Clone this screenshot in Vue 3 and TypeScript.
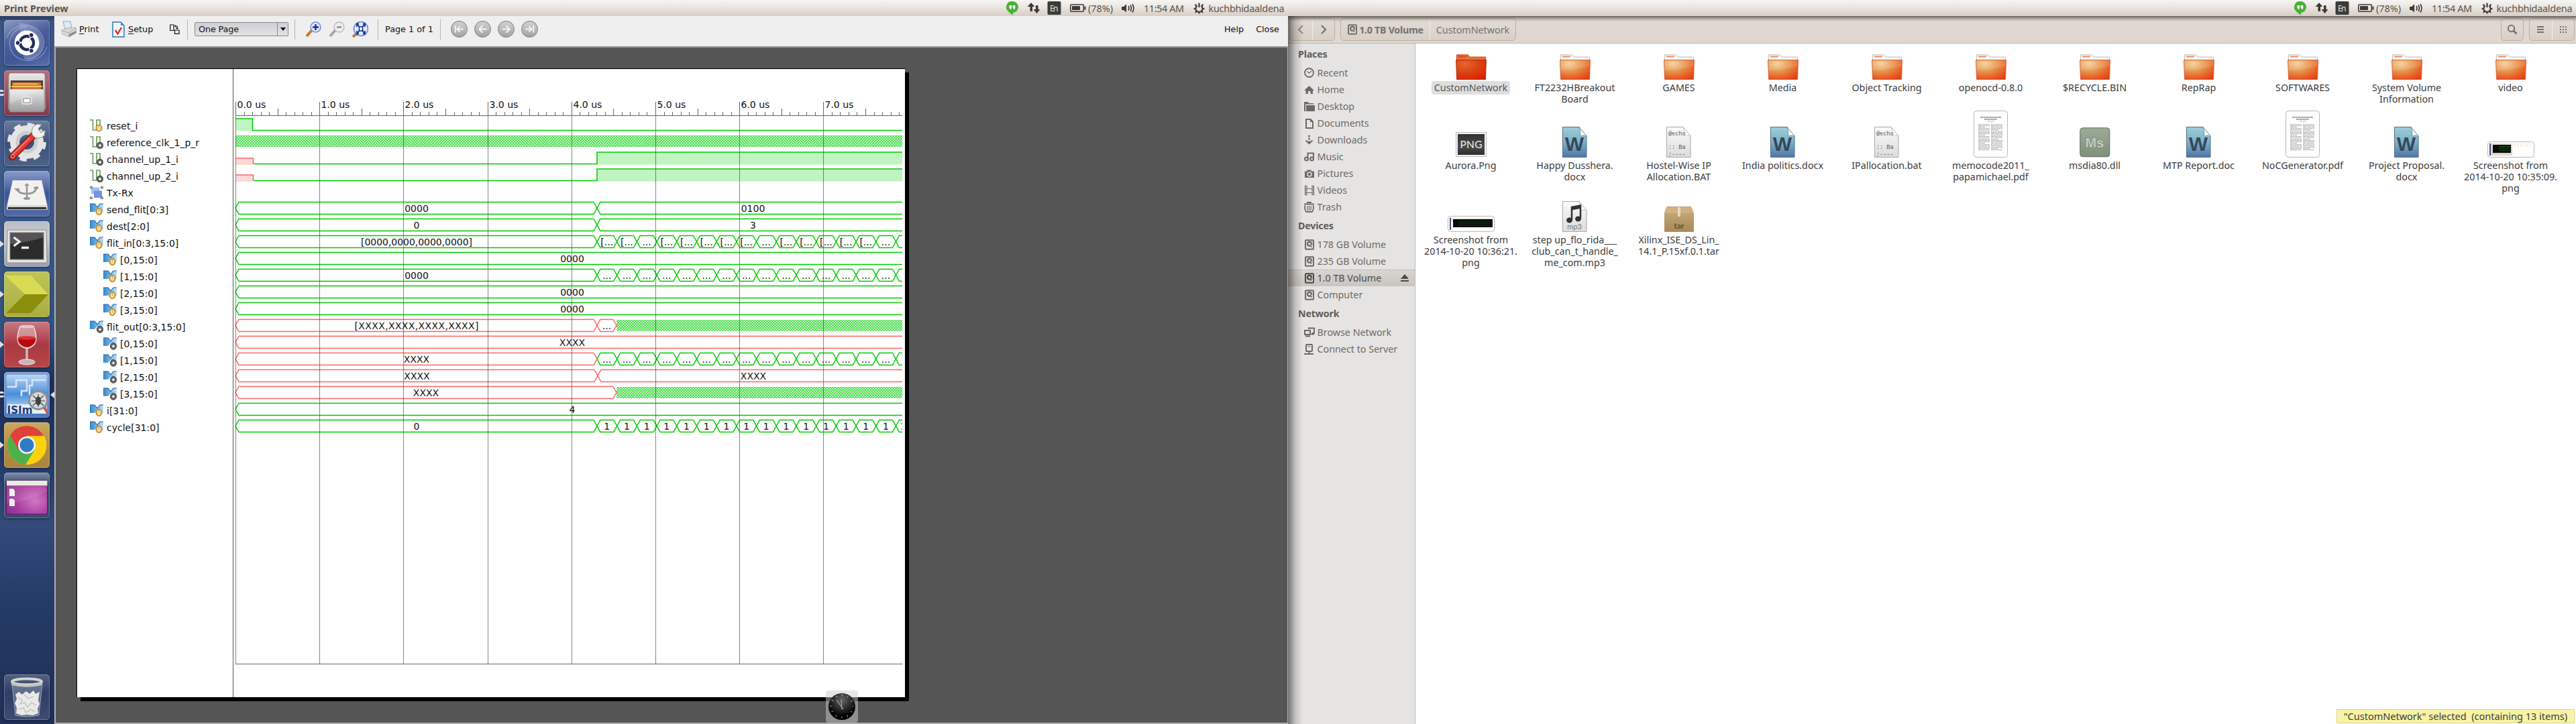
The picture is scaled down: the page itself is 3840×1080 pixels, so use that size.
<script setup lang="ts">
interface Launch { icon: string; bg: string; left?: 'one' | 'two'; right?: boolean }
interface Sig { name: string; icon: 'bitU' | 'bitO' | 'group' | 'busU' | 'busO'; indent?: boolean }
interface Item { icon: string; label: string; active?: boolean; eject?: boolean }
interface FileItem { kind: string; lines: string[]; selected?: boolean }
interface Seg { d: string; color: string }
interface Txt { x: number; y: number; t: string; len?: number }

const GREEN = '#00cc00'
const RED = '#ff6464'

const launcher: Launch[] = [
  { bg: 'linear-gradient(160deg,#8d9cc4 0%,#4a5e9c 40%,#405694 70%,#5a6fb0 100%)', icon: '<path d="M4 26C14 2 50 2 58 26C64 44 50 58 34 58M64 40C56 66 18 66 10 44C4 28 16 10 34 10" fill="none" stroke="#b9c6e6" stroke-opacity=".5" stroke-width="1.3"/><path d="M22 4C44 4 60 20 58 40C52 58 40 60 30 58" fill="#a7b6da" fill-opacity=".35"/><circle cx="34" cy="34" r="18.5" fill="#fff"/><circle cx="34" cy="34" r="10" fill="none" stroke="#1f2f57" stroke-width="4.4" stroke-dasharray="18.9 2" stroke-dashoffset="9"/><circle cx="20.5" cy="34" r="3.4" fill="#1f2f57" stroke="#fff"/><circle cx="40.700" cy="22.300" r="3.400" fill="#1f2f57" stroke="#fff"/><circle cx="40.700" cy="45.700" r="3.400" fill="#1f2f57" stroke="#fff"/>' },
  { bg: 'linear-gradient(#b57078,#85374a)', left: 'two', icon: '<path d="M10 4H58Q61 4 61 8L62 58H6L7 8Q7 4 10 4Z" fill="url(#gMetal)" stroke="#777" stroke-width=".6"/><rect x="10" y="15" width="48" height="16" fill="#4a4038"/><path d="M12 18H55V29H12Z" fill="#d9762b"/><path d="M11 23H57V25H11ZM14 19.500H50V21H14Z" fill="#f6c66b"/><path d="M8 28H60V60Q60 62 58 62H10Q8 62 8 60Z" fill="url(#gMetal)" stroke="#888" stroke-width=".7"/><path d="M8 28H58L8 50Z" fill="#fff" opacity=".22"/><rect x="27" y="40" width="14" height="10" rx="3" fill="#a5a5a5" stroke="#eee" stroke-width="1.5"/><rect x="29.5" y="42.5" width="9" height="5" rx="1" fill="#fff"/>' },
  { bg: 'linear-gradient(#6a7b99,#3a5180 50%,#4f6285)', icon: '<circle cx="34" cy="32" r="18" fill="none" stroke="#e4e4e4" stroke-width="14"/><circle cx="34" cy="32" r="26" fill="none" stroke="#e4e4e4" stroke-width="6" stroke-dasharray="10.210 10.210"/><circle cx="34" cy="32" r="14" fill="none" stroke="#cdcdcd" stroke-width="5"/><path d="M12 54L45 21" stroke="#8e1712" stroke-width="10.500" stroke-linecap="round"/><path d="M12.500 53.500L42 24" stroke="#dc3b33" stroke-width="7.500" stroke-linecap="round"/><path d="M12.500 51L38 26" stroke="#f07a70" stroke-width="2" stroke-linecap="round"/><path d="M42 21Q39 8 50 5L56 6L51 12L55 18L61 14Q62 25 52 26L47 26Z" fill="#f0f0ee" stroke="#8c8c88"/><circle cx="13" cy="53" r="2.300" fill="#8e1712" stroke="#f4b0ab"/>' },
  { bg: 'linear-gradient(#8a9bc8,#3c559a 50%,#5269ac)', icon: '<path d="M13 14H56L65 53V58H4V53Z" fill="#d8d8d8" stroke="#888" stroke-width=".7"/><path d="M13 14H56L64 51H5Z" fill="#f1f1f0"/><path d="M6 54H63V57H6Z" fill="#333"/><g fill="none" stroke="#979797" stroke-width="2.600"><path d="M34 21V40M20 28Q22 34 34 34Q47 34 48 25"/></g><ellipse cx="34" cy="41" rx="5" ry="2" fill="#979797"/><path d="M34 18L38 22H30ZM15 26H23V30H19ZM44 24L51 23V27H45Z" fill="#979797"/>' },
  { bg: 'linear-gradient(#b8bcc8,#c9cad0 30%,#9a9faf)', left: 'one', icon: '<path d="M5 13H63L64 60Q64 62 62 62H6Q4 62 4 60Z" fill="#e4e4e2" stroke="#8a8a8a"/><rect x="9" y="17" width="50" height="40" fill="#2b2c2c" stroke="#777"/><path d="M9 17H59V24Q34 32 9 34Z" fill="#777" opacity=".55"/><path d="M14.500 24L23 30.500L14.500 37M26 39.500H37" fill="none" stroke="#eee" stroke-width="3.300"/>' },
  { bg: 'linear-gradient(#bfc459,#a9ad42)', left: 'one', icon: '<path d="M2 6H40L66 34H31Z" fill="#dadb55"/><path d="M31 34H66L40 62H3Z" fill="#8b8d0c"/>' },
  { bg: 'linear-gradient(#c97a80,#a93a42 50%,#b8454a)', left: 'one', icon: '<path d="M34 38V58" stroke="#c9bcbc" stroke-width="3.500"/><ellipse cx="34" cy="60" rx="12" ry="4" fill="#c9b5b5" stroke="#f3eaea"/><path d="M24 7Q17 25 23 34Q34 45 45 34Q51 25 44 7Z" fill="#e3c3c6" fill-opacity=".55" stroke="#ece1e1" stroke-width="1.500"/><path d="M21 24H47Q48 31 42 35Q34 41 26 35Q20 31 21 24Z" fill="#b30b10"/><ellipse cx="34" cy="24" rx="12.800" ry="2.800" fill="#e23035"/><ellipse cx="34" cy="7" rx="10" ry="1.800" fill="none" stroke="#e8dada"/>' },
  { bg: 'linear-gradient(#7da0d6,#4878bd)', left: 'two', right: true, icon: '<rect x="3.500" y="4" width="61" height="58" rx="2" fill="url(#gIsim)"/><path d="M5 22H18V12H34V28H26V36M62 12H42V20H38V34" fill="none" stroke="#d5e6f8" stroke-width="2.500"/><path d="M5 62V48H44L64 58V62Z" fill="#e9eff6"/><circle cx="51" cy="42" r="13.500" fill="#d5d9dc" stroke="#8a8f94" stroke-width="3"/><ellipse cx="51" cy="43" rx="4" ry="6.500" fill="#3a3a3a"/><path d="M43 35L59 50M59 35L43 50M41 43H61M51 33V52" stroke="#444" stroke-width="1.200"/><path d="M60 53L65 61" stroke="#c95b55" stroke-width="4"/><text x="4.500" y="62" font-family="DejaVu Sans" font-size="16" font-weight="bold" fill="#1c3c7c" textLength="38" lengthAdjust="spacingAndGlyphs">ISIm</text>' },
  { bg: 'linear-gradient(#c9a95f,#b18c3e 60%,#a98540)', left: 'one', icon: '<circle cx="34" cy="34" r="29" fill="#ffd41c"/><path d="M34 34L8.900 19.500A29 29 0 0 1 59.500 20.500L34 20.500Z" fill="#e2403b"/><path d="M8.900 19.500A29 29 0 0 0 32.500 63L46 41L34 34L22 38Z" fill="#4fb04b"/><path d="M34 20.500H60A29 29 0 0 1 32.500 63L46 41Z" fill="#fdd10c"/><path d="M8.900 19.500L22 41L34 20.500Z" fill="#e2403b"/><circle cx="34" cy="34" r="13" fill="#f3f3f3"/><circle cx="34" cy="34" r="10.500" fill="#2f7cc4"/>' },
  { bg: 'linear-gradient(#7d8ba4,#3d4e74 25%,#3c4a72)', icon: '<rect x="3.500" y="12" width="61" height="50" rx="2" fill="url(#gPurple)" stroke="#5c1763"/><path d="M4 12H64.500V19.500H4Z" fill="#ecebe0"/><path d="M4 19H64.500V20H4Z" fill="#9a8d4a"/><path d="M8 24H13.500L16 26.500V35H8ZM8 39H13.500L16 41.500V50H8Z" fill="#f3eef4"/><path d="M4 20H64V28Q34 44 4 46Z" fill="#fff" opacity=".1"/>' },
]
const trashIcon = '<path d="M12 14H57L52 61Q34 65 17 61Z" fill="#b9c2d6" fill-opacity=".35" stroke="#aab4cb" stroke-width=".8"/><path d="M17 30L22 26L27 30L33 25L38 29L44 24L47 29L53 26L51 38L53 44L50 51L51 58L43 61L34 60L26 61L18 58L19 50L16 43L19 37Z" fill="#e9e9e7"/><path d="M20 34L27 38L24 44L31 42L35 49L41 42L48 46M22 52L29 50L33 57L40 52L46 56M30 30L36 36L44 33" fill="none" stroke="#c6c6c4" stroke-width="1.600"/><ellipse cx="34" cy="11" rx="22" ry="4.500" fill="none" stroke="#d4d4d0" stroke-width="4"/><path d="M11 12V16Q34 22 57 16V12Q34 20 11 12Z" fill="#c2c2be"/>'

const signals: Sig[] = [
  { name: 'reset_i', icon: 'bitU' }, { name: 'reference_clk_1_p_r', icon: 'bitO' },
  { name: 'channel_up_1_i', icon: 'bitO' }, { name: 'channel_up_2_i', icon: 'bitO' },
  { name: 'Tx-Rx', icon: 'group' }, { name: 'send_flit[0:3]', icon: 'busU' }, { name: 'dest[2:0]', icon: 'busU' },
  { name: 'flit_in[0:3,15:0]', icon: 'busU' },
  ...[0, 1, 2, 3].map((n): Sig => ({ name: `[${n},15:0]`, icon: 'busU', indent: true })),
  { name: 'flit_out[0:3,15:0]', icon: 'busO' },
  ...[0, 1, 2, 3].map((n): Sig => ({ name: `[${n},15:0]`, icon: 'busO', indent: true })),
  { name: 'i[31:0]', icon: 'busU' }, { name: 'cycle[31:0]', icon: 'busU' },
]
const glyph: Record<string, string> = {
  bitU: '<path d="M0 1H4.500V16H10V1H15V14" fill="none" stroke="#6f9c5f" stroke-width="1.700"/><ellipse cx="13.500" cy="13" rx="4.700" ry="5" fill="#dfa93a" stroke="#8b6512" stroke-width=".6"/><path d="M12 10V13.500Q12 15.500 13.500 15.500Q15 15.500 15 13.500V10" fill="none" stroke="#fff" stroke-width="1.300"/>',
  bitO: '<path d="M0 1H4.500V16H10V1H15V14" fill="none" stroke="#6f9c5f" stroke-width="1.700"/><ellipse cx="15" cy="14" rx="4.700" ry="4.900" fill="#666" stroke="#333" stroke-width=".8"/><path d="M13 14H17M15 12V16" stroke="#fff" stroke-width="1.400"/>',
  group: '<rect x="2" y="1.500" width="12" height="10" fill="#9cc2f5"/><rect x="6" y="6.500" width="12" height="10.500" fill="#7295dd"/><g fill="#fff" stroke="#555"><rect x=".8" y=".5" width="2.400" height="2.400"/><rect x="16.800" y=".5" width="2.400" height="2.400"/><rect x=".8" y="16" width="2.400" height="2.400"/><rect x="16.800" y="16" width="2.400" height="2.400"/></g>',
  busU: '<path d="M0 1H7L11 6L15 1H20V13H15L11 9L7 13H0Z" fill="url(#gBus)"/><path d="M0 1H7L11 6L15 1H20" fill="none" stroke="#2565a8" stroke-width="1.200"/><ellipse cx="13.500" cy="12.500" rx="4.700" ry="5.200" fill="#dfa93a" stroke="#8b6512" stroke-width=".6"/><path d="M12 9.500V13Q12 15 13.500 15Q15 15 15 13V9.500" fill="none" stroke="#fff" stroke-width="1.300"/>',
  busO: '<path d="M0 1H7L11 6L15 1H20V13H15L11 9L7 13H0Z" fill="url(#gBus)"/><path d="M0 1H7L11 6L15 1H20" fill="none" stroke="#2565a8" stroke-width="1.200"/><ellipse cx="15" cy="13.500" rx="4.700" ry="4.900" fill="#666" stroke="#333" stroke-width=".8"/><path d="M13 13.500H17M15 11.500V15.500" stroke="#fff" stroke-width="1.400"/>',
}

/* Waveform geometry: x = 0 at the 0.0 us cursor, y = 0 at the paper top */
const END = 994
const US = 125.2
const T = 539
const rowY = (r: number) => 84 + r * 25
const segs: Seg[] = []
const txts: Txt[] = []
const fills: { x: number; y: number; w: number; h: number; c: string }[] = []
const hatches: { x: number; y: number; w: number }[] = []
const ticks: { x: number; y: number }[] = []
const majors: { x: number; t: string }[] = []
for (let i = 0; i * 12.520 < END; i++) ticks.push({ x: Math.round(i * 12.520) + 0.5, y: i % 10 === 0 ? 49 : i % 5 === 0 ? 59 : 64 })
for (let i = 0; i < 8; i++) majors.push({ x: Math.round(i * US) + 0.5, t: `${i}.0 us` })

function bus(r: number, a: number, b: number, color: string, text = '', tx?: number, len?: number) {
  const y = rowY(r), t = y - 10.500, m = y - 1.500, bo = y + 7.500
  const close = b < END
  const e = close ? b - 5 : END
  segs.push({ color, d: `M${e} ${t}H${a + 5}L${a} ${m}L${a + 5} ${bo}H${e}` + (close ? `L${b} ${m}L${e} ${t}` : '') })
  if (text) txts.push({ x: tx ?? (a + Math.min(b, END)) / 2, y: y + 3.500, t: text, len })
}
function train(r: number, label: (k: number) => string) {
  for (let k = 0; k < 16; k++) bus(r, T + k * 29.700, T + (k + 1) * 29.700, GREEN, label(k), k === 15 ? 995.500 : T + k * 29.700 + 14.700)
}
function bit(r: number, pts: string, color: string) { segs.push({ color, d: pts.replace(/H!/g, `V${rowY(r) - 10}`).replace(/L!/g, `V${rowY(r) + 7.500}`) }) }

bit(0, `M0 ${rowY(0) - 10}H25.500L!H${END}`, GREEN)
fills.push({ x: 0, y: rowY(0) - 10, w: 25, h: 18, c: '#c0f4c0' })
hatches.push({ x: 0, y: rowY(1) - 10, w: END })
for (const r of [2, 3]) {
  fills.push({ x: 0, y: rowY(r) - 1, w: 26, h: 10, c: '#ffd8d8' }, { x: T, y: rowY(r) - 10, w: END - T, h: 18.500, c: '#c0f4c0' })
  segs.push({ color: RED, d: `M0 ${rowY(r) - 1}H26.500V${rowY(r) + 7}` })
  bit(r, `M26.500 ${rowY(r) + 7.500}H${T}H!H${END}`, GREEN)
}
bus(5, 0, T, GREEN, '0000', 270); bus(5, T, 2000, GREEN, '0100', 771.500)
bus(6, 0, T, GREEN, '0', 270); bus(6, T, 2000, GREEN, '3', 771.500)
bus(7, 0, T, GREEN, '[0000,0000,0000,0000]', 270, 166); train(7, k => k === 15 ? '' : k % 6 === 2 ? '...' : '[...')
bus(8, 0, 2000, GREEN, '0000', 502)
bus(9, 0, T, GREEN, '0000', 270); train(9, k => k === 15 ? '' : '...')
bus(10, 0, 2000, GREEN, '0000', 502)
bus(11, 0, 2000, GREEN, '0000', 502)
bus(12, 0, T, RED, '[XXXX,XXXX,XXXX,XXXX]', 270, 185); bus(12, T, T + 29, RED, '...'); hatches.push({ x: T + 29, y: rowY(12) - 10, w: END - T - 29 })
bus(13, 0, 2000, RED, 'XXXX', 502)
bus(14, 0, T, RED, 'XXXX', 270); train(14, k => k === 15 ? '' : '...')
bus(15, 0, T + 1, RED, 'XXXX', 270.500); bus(15, T + 1, 2000, RED, 'XXXX', 772)
bus(16, 0, T + 29, RED, 'XXXX'); hatches.push({ x: T + 29, y: rowY(16) - 10, w: END - T - 29 })
bus(17, 0, 2000, GREEN, '4', 502)
bus(18, 0, T, GREEN, '0', 270); train(18, () => '1')

const places: { title: string; items: Item[] }[] = [
  { title: 'Places', items: ['Recent', 'Home', 'Desktop', 'Documents', 'Downloads', 'Music', 'Pictures', 'Videos', 'Trash'].map(l => ({ icon: l, label: l })) },
  { title: 'Devices', items: [{ icon: 'Disk', label: '178 GB Volume' }, { icon: 'Disk', label: '235 GB Volume' }, { icon: 'Disk', label: '1.0 TB Volume', active: true, eject: true }, { icon: 'Disk', label: 'Computer' }] },
  { title: 'Network', items: [{ icon: 'Net', label: 'Browse Network' }, { icon: 'Server', label: 'Connect to Server' }] },
]
const side: Record<string, string> = {
  Recent: '<circle cx="7.500" cy="7.500" r="6.500" fill="none" stroke="currentColor" stroke-width="1.800"/><path d="M4.500 5.500L7.500 8L11 5" fill="none" stroke="currentColor" stroke-width="1.300"/>',
  Home: '<path d="M7.500 2L15 9H13V14H9.500V10H6V14H2.500V9H0Z" fill="currentColor"/>',
  Desktop: '<path d="M0 1H6L7 3H14V4.500H2V15H0Z" fill="currentColor"/><path d="M3 6H16V15H3Z" fill="currentColor"/>',
  Documents: '<path d="M3 2H9.500L13 5.500V15H3Z" fill="none" stroke="currentColor" stroke-width="2"/><path d="M9 1L14 6H9Z" fill="currentColor"/>',
  Downloads: '<circle cx="7.500" cy="2" r="1.500" fill="currentColor"/><circle cx="7.500" cy="6" r="1.500" fill="currentColor"/><path d="M7.500 9V13M2.500 8.500L7.500 13.200L12.500 8.500" fill="none" stroke="currentColor" stroke-width="2"/>',
  Music: '<path d="M5.500 11V2.500H14V10" fill="none" stroke="currentColor" stroke-width="2"/><circle cx="3.500" cy="11" r="2.500" fill="none" stroke="currentColor" stroke-width="2"/><circle cx="11.500" cy="11" r="2.500" fill="none" stroke="currentColor" stroke-width="2"/>',
  Pictures: '<path d="M1 4.500H4.500V2.500H10.500V4.500H15V14H1Z" fill="currentColor"/><circle cx="8" cy="9" r="3" fill="none" stroke="#e6e4e2" stroke-width="1.500"/>',
  Videos: '<path d="M1.500 .5V15.500M4 .5V15.500M12 .5V15.500M14.500 .5V15.500" stroke="currentColor" stroke-width="1"/><path d="M2.700 1V15.500M13.300 1V15.500" stroke="currentColor" stroke-width="1.800" stroke-dasharray="1.500 1.500"/><path d="M4 5.500H12M4 11.500H12" stroke="currentColor"/>',
  Trash: '<path d="M0 3.500H15M4 1H11" stroke="currentColor" stroke-width="2"/><path d="M1.500 5.500Q0 11 3 15H12Q15 11 13.500 5.500" fill="none" stroke="currentColor" stroke-width="1.800"/><path d="M5 6Q4 10 5.500 13M7.500 6V13M10 6Q11 10 9.500 13" fill="none" stroke="currentColor" stroke-width="1.200"/>',
  Disk: '<rect x="2" y="1.200" width="12" height="13.600" rx="1" fill="none" stroke="currentColor" stroke-width="2"/><circle cx="8" cy="6.800" r="3" fill="none" stroke="currentColor" stroke-width="2.400"/><path d="M8 7L12.500 12.500" stroke="#e6e4e2" stroke-width="3"/><path d="M8.500 7.500L11 11.500" stroke="currentColor" stroke-width="2"/>',
  Net: '<rect x="1" y="5" width="8" height="6" fill="none" stroke="currentColor" stroke-width="2"/><path d="M2 13.500H9" stroke="currentColor" stroke-width="2"/><path d="M7 3V1.500H15V9H11.500M10.500 10.500H15" fill="none" stroke="currentColor" stroke-width="2"/>',
  Server: '<rect x="3" y="1" width="9" height="10" rx="1" fill="none" stroke="currentColor" stroke-width="2"/><path d="M5.500 4H9.500" stroke="currentColor"/><path d="M7.500 11V14M0 15H14" stroke="currentColor" stroke-width="2"/>',
}

const rows: FileItem[][] = [
  [
    { kind: 'folderSel', lines: ['CustomNetwork'], selected: true }, { kind: 'folder', lines: ['FT2232HBreakout', 'Board'] },
    { kind: 'folder', lines: ['GAMES'] }, { kind: 'folder', lines: ['Media'] }, { kind: 'folder', lines: ['Object Tracking'] },
    { kind: 'folder', lines: ['openocd-0.8.0'] }, { kind: 'folder', lines: ['$RECYCLE.BIN'] }, { kind: 'folder', lines: ['RepRap'] },
    { kind: 'folder', lines: ['SOFTWARES'] }, { kind: 'folder', lines: ['System Volume', 'Information'] }, { kind: 'folder', lines: ['video'] },
  ],
  [
    { kind: 'png', lines: ['Aurora.Png'] }, { kind: 'word', lines: ['Happy Dusshera.', 'docx'] }, { kind: 'bat', lines: ['Hostel-Wise IP', 'Allocation.BAT'] },
    { kind: 'word', lines: ['India politics.docx'] }, { kind: 'bat', lines: ['IPallocation.bat'] }, { kind: 'pdf', lines: ['memocode2011_', 'papamichael.pdf'] },
    { kind: 'dll', lines: ['msdia80.dll'] }, { kind: 'word', lines: ['MTP Report.doc'] }, { kind: 'pdf', lines: ['NoCGenerator.pdf'] },
    { kind: 'word', lines: ['Project Proposal.', 'docx'] }, { kind: 'shotB', lines: ['Screenshot from', '2014-10-20 10:35:09.', 'png'] },
  ],
  [
    { kind: 'shotA', lines: ['Screenshot from', '2014-10-20 10:36:21.', 'png'] }, { kind: 'mp3', lines: ['step up_flo_rida___', 'club_can_t_handle_', 'me_com.mp3'] },
    { kind: 'tar', lines: ['Xilinx_ISE_DS_Lin_', '14.1_P.15xf.0.1.tar'] },
  ],
]
const page = (fill: string, stroke: string) => `<path d="M.5 .5H25L36 14V45.500H.5Z" fill="${fill}" stroke="${stroke}"/><path d="M25 .5Q28 8 26.500 14Q31 12 36 14Z" fill="#fff" stroke="${stroke}" stroke-width=".6"/>`
let pdfLines = ''
for (let y = 20; y < 60; y += 2) pdfLines += `<path d="M7 ${y + 0.5}H${y % 12 === 0 ? 17 : 24}M26 ${y + 0.5}H${y % 14 === 0 ? 37 : 43}" stroke="#a2a2a2" stroke-width="1.100" stroke-dasharray="${2 + (y % 5)} .7"/>`
const fileArt: Record<string, { w: number; h: number; svg: string }> = {
  folder: { w: 46, h: 38, svg: '<path d="M1.500 9V.8H18L21.500 4H44.500V9Z" fill="#f5f5f4" stroke="#c2bdb8"/><path d="M4 2.500H16V4.500H4Z" fill="#f0905a"/><path d="M.5 8.500H45.500L44.500 37.500H1.500Z" fill="url(#gFold)" stroke="#c4562c" stroke-width=".8"/><path d="M1 9H45V17Q24 24 1.500 24Z" fill="#fff" opacity=".12"/>' },
  folderSel: { w: 46, h: 38, svg: '<path d="M1.500 9V.8H18L21.500 4H44.500V9Z" fill="#e8703d" stroke="#b34a1c"/><path d="M4 2.500H16V4.500H4Z" fill="#ea4316"/><path d="M.5 8.500H45.500L44.500 37.500H1.500Z" fill="url(#gFoldS)" stroke="#a32208" stroke-width=".8"/>' },
  png: { w: 46, h: 38, svg: '<rect x=".5" y=".5" width="45" height="36" fill="#f6f6f6" stroke="#bbb"/><rect x="3" y="3" width="40" height="31" fill="url(#gPng)"/><text x="23" y="23.500" font-family="Lato" font-size="15.500" fill="#eee" text-anchor="middle" textLength="33">PNG</text>' },
  word: { w: 37, h: 46, svg: page('url(#gWord)', '#50728c') + '<text x="18" y="35.500" font-family="Liberation Sans" font-weight="bold" font-size="30" fill="#34495a" text-anchor="middle">W</text>' },
  bat: { w: 37, h: 46, svg: page('url(#gPage)', '#aaa') + '<g font-family="Liberation Mono" font-size="8.500" fill="#555"><text x="3" y="13">@echo</text><text x="3" y="33">:: Ba</text><text x="3" y="43.500">:----</text></g>' },
  mp3: { w: 37, h: 46, svg: page('url(#gPage)', '#aaa') + '<path d="M14 28V9L27 6.500V26" fill="none" stroke="#333" stroke-width="2.500"/><path d="M14 9L27 6.500V11L14 13.500Z" fill="#333"/><ellipse cx="10.500" cy="28.500" rx="4.500" ry="4" fill="#333"/><ellipse cx="23.500" cy="26.500" rx="4.500" ry="4" fill="#333"/><text x="18" y="41.500" font-family="Lato" font-size="11" fill="#777" text-anchor="middle">mp3</text>' },
  tar: { w: 44, h: 38, svg: '<path d="M4 .5H39.500L43.500 10V37.500H.5V10Z" fill="url(#gTar)" stroke="#8e7448" stroke-width=".6"/><path d="M4 .5H39.500L43.500 10H.5Z" fill="#cfb184"/><path d="M20 1H24V15H20Z" fill="#ead8b5"/><text x="22" y="33" font-family="Lato" font-weight="bold" font-size="12" fill="#66512e" text-anchor="middle">tar</text>' },
  dll: { w: 46, h: 45, svg: '<rect x=".8" y=".8" width="44" height="43" rx="4" fill="url(#gDll)" stroke="#5f6b5a"/><text x="22.500" y="29.500" font-family="Liberation Sans" font-weight="bold" font-size="20" fill="#d5dad2" stroke="#6d7868" stroke-width=".4" text-anchor="middle">Ms</text>' },
  pdf: { w: 51, h: 70, svg: '<rect x=".5" y=".5" width="50" height="69" rx="4" fill="#fff" stroke="#bbb7b2"/><path d="M10 10H41M16 13H35" stroke="#888" stroke-width="1.300" stroke-dasharray="4 .5"/><path d="M20 16H31" stroke="#bbb"/>' + pdfLines },
  shotA: { w: 70, h: 24, svg: '<rect x=".5" y=".5" width="69" height="23" rx="4" fill="#fff" stroke="#bbb7b2"/><path d="M3 3H67V8H3Z" fill="#ececec"/><path d="M3 3H5V21H3Z" fill="#42557c"/><rect x="8" y="5" width="59" height="12" fill="#050a05"/><path d="M16 8H67M16 11H67M16 14H67" stroke="#123c12" stroke-width="1"/>' },
  shotB: { w: 70, h: 24, svg: '<rect x=".5" y=".5" width="69" height="23" rx="4" fill="#fff" stroke="#bbb7b2"/><rect x="3" y="3" width="34" height="18" fill="#dcd8d6"/><rect x="8" y="5" width="27" height="12" fill="#050a05"/><path d="M17 7.500H34M17 10H34M17 13H34" stroke="#176017"/><path d="M3 3H5V21H3Z" fill="#42557c"/><path d="M40 4H66M40 7H66" stroke="#edc9b4" stroke-dasharray="2 2.500"/>' },
}
const navGlyph = ['M6.500 7V17M18 12H9M13 8L9 12L13 16', 'M18 12H7M12 7L7 12L12 17', 'M6 12H17M12 7L17 12L12 17', 'M6 12H15M11 8L15 12L11 16M17.500 7V17']
</script>

<template>
  <div class="screen">
    <svg class="defs" width="0" height="0">
      <defs>
        <linearGradient id="gMetal" x2="0" y2="1"><stop offset="0" stop-color="#e9e9e9" /><stop offset="1" stop-color="#9b9b9b" /></linearGradient>
        <linearGradient id="gIsim" x2="0" y2="1"><stop offset="0" stop-color="#b9d6f4" /><stop offset=".5" stop-color="#4a8fda" /><stop offset="1" stop-color="#d3e4f5" /></linearGradient>
        <radialGradient id="gPurple" cx=".7" cy=".6" r=".8"><stop offset="0" stop-color="#d079c0" /><stop offset=".6" stop-color="#a83aa0" /><stop offset="1" stop-color="#87308f" /></radialGradient>
        <linearGradient id="gBus" x2="1" y2="0"><stop offset="0" stop-color="#2f86cb" /><stop offset="1" stop-color="#bfe0f5" /></linearGradient>
        <radialGradient id="gFold" cx=".3" cy=".2" r="1"><stop offset="0" stop-color="#f7cd92" /><stop offset=".45" stop-color="#e58c45" /><stop offset=".8" stop-color="#ea511c" /><stop offset="1" stop-color="#cf4515" /></radialGradient>
        <radialGradient id="gFoldS" cx=".3" cy=".2" r="1"><stop offset="0" stop-color="#e8642e" /><stop offset=".5" stop-color="#d8410f" /><stop offset=".8" stop-color="#e02808" /><stop offset="1" stop-color="#bd2305" /></radialGradient>
        <linearGradient id="gPng" x2="0" y2="1"><stop offset="0" stop-color="#333" /><stop offset=".6" stop-color="#4a4a4a" /><stop offset="1" stop-color="#2e2e2e" /></linearGradient>
        <linearGradient id="gWord" x2="0" y2="1"><stop offset="0" stop-color="#9ccdd8" /><stop offset=".5" stop-color="#7fb0c8" /><stop offset="1" stop-color="#4c76a2" /></linearGradient>
        <linearGradient id="gPage" x2="0" y2="1"><stop offset="0" stop-color="#fafafa" /><stop offset="1" stop-color="#dcdcdc" /></linearGradient>
        <linearGradient id="gTar" x2="0" y2="1"><stop offset="0" stop-color="#c9ad80" /><stop offset="1" stop-color="#a88a58" /></linearGradient>
        <linearGradient id="gDll" x2="0" y2="1"><stop offset="0" stop-color="#9cab96" /><stop offset="1" stop-color="#7f8f7a" /></linearGradient>
        <linearGradient id="gBtn" x2="0" y2="1"><stop offset="0" stop-color="#d2d2d2" /><stop offset="1" stop-color="#a2a2a2" /></linearGradient>
        <radialGradient id="gClock" cx=".5" cy=".25" r=".6"><stop offset="0" stop-color="#666" /><stop offset="1" stop-color="#000" /></radialGradient>
      </defs>
    </svg>

    <section v-for="mon in 2" :key="mon" class="monitor">
      <header class="panel">
        <span class="wtitle">{{ mon === 1 ? 'Print Preview' : '' }}</span>
        <svg class="ind" width="420" height="24" viewBox="0 0 420 24">
          <path d="M11 2A8.500 8.500 0 0 1 12 19V22.500Q8 21 5 17A8.500 8.500 0 0 1 11 2Z" fill="#4eae3c" />
          <path d="M6.500 8H10V12Q9.500 14 7.500 14V12H6.500ZM11.800 8H15.300V12Q14.800 14 12.800 14V12H11.800Z" fill="#fff" />
          <path d="M39 4L44.500 10H41V17H37.500V10H33.500ZM47.500 20L42.500 14H46V8H49.500V14H52.500Z" fill="#3c3b37" />
          <rect x="63.500" y="2" width="20" height="20" rx="2" fill="#3c3b37" />
          <text x="67" y="17" font-size="12" fill="#e8e4dd" textLength="12.500">En</text>
          <rect x="97.800" y="6.800" width="19.500" height="10.500" rx="1.500" fill="none" stroke="#3c3b37" stroke-width="1.600" />
          <rect x="100" y="9" width="12" height="6" fill="#3c3b37" /><rect x="118.500" y="9.500" width="2" height="5" fill="#3c3b37" />
          <text x="124" y="17.500" textLength="37">(78%)</text>
          <path d="M174 10H177L181 6V18.500L177 15H174Z" fill="#3c3b37" />
          <path d="M184 9Q186 12.200 184 15.500M187 7.500Q190 12.200 187 17M190 6Q194 12.200 190 18.500" fill="none" stroke="#3c3b37" stroke-width="1.600" />
          <text x="207" y="17.500" textLength="60">11:54 AM</text>
          <path d="M286.500 8.500A5.200 5.200 0 1 0 292.500 8.500M289.500 4.500V11" fill="none" stroke="#3c3b37" stroke-width="2.200" />
          <path d="M281.500 13H284.500M294.500 13H297.500M289.500 18V20.500M283.500 6.500L285.500 8.500M295.500 6.500L293.500 8.500M283.800 18.800L285.800 16.800M295.200 18.800L293.200 16.800" stroke="#3c3b37" stroke-width="2" />
          <text x="303.500" y="17.500" textLength="113">kuchbhidaaldena</text>
        </svg>
      </header>

      <div v-if="mon === 1" class="desk">
        <nav class="launcher">
          <div v-for="(l, i) in launcher" :key="i" class="slot">
            <svg v-if="l.left" class="pip" width="6" height="12" viewBox="0 0 6 12"><path :d="l.left === 'one' ? 'M0 1L6 6L0 11Z' : 'M0 1H4L6 3V4H0ZM0 7H6V9L4 10H0Z'" fill="#ddd" /></svg>
            <svg class="tile" :style="{ background: l.bg }" width="68" height="68" viewBox="0 0 68 68" v-html="l.icon" />
            <svg v-if="l.right" class="pip r" width="7" height="12" viewBox="0 0 7 12"><path d="M7 1L1 6L7 11Z" fill="#ddd" /></svg>
          </div>
          <div class="slot trash"><svg class="tile clear" width="68" height="68" viewBox="0 0 68 68" v-html="trashIcon" /></div>
        </nav>

        <div class="app">
          <div class="toolbar">
            <svg class="i-print" width="24" height="25" viewBox="0 0 24 25"><path d="M3 1H14L16 13H6Z" fill="#dfeafa" stroke="#7f93b8" stroke-width=".8" /><path d="M1 14L9 11L22 10L23 18L12 24L2 20Z" fill="#d9d9d9" stroke="#999" stroke-width=".7" /><path d="M2 15L12 18L22 11M12 18V24" fill="none" stroke="#aaa" /><path d="M12 20L22 15V18L12 24Z" fill="#888" /></svg>
            <span class="t-print"><u>P</u>rint</span>
            <svg class="i-setup" width="19" height="24" viewBox="0 0 19 24"><path d="M1 1H13L18 6V23H1Z" fill="#f3f8fe" stroke="#2a6fb4" stroke-width="1.400" /><path d="M13 1V6H18Z" fill="#3f8fd0" /><path d="M5 13L8.500 18.500L14 9" fill="none" stroke="#e22626" stroke-width="2.400" /></svg>
            <span class="t-setup"><u>S</u>etup</span>
            <svg class="i-orient" width="15" height="16" viewBox="0 0 15 16"><path d="M.7 1H6V9.500H.7ZM7.500 9H14V14.300H7.500ZM8 3H11V7" fill="none" stroke="#111" stroke-width="1.200" /><path d="M9 1V5L7 3ZM9 5.500H13L11 8Z" fill="#111" /></svg>
            <i class="sep s1" />
            <div class="combo"><span>One Page</span><b><svg width="8" height="5" viewBox="0 0 8 5"><path d="M0 0H8L4 5Z" /></svg></b></div>
            <i class="sep s2" />
            <svg class="i-z" width="24" height="24" viewBox="0 0 24 24"><path d="M10 13L2 22" stroke="#c77a22" stroke-width="4" /><circle cx="15.500" cy="8.500" r="7.500" fill="#dcebff" stroke="#7288e0" stroke-width="1.500" /><path d="M15.500 4V13M11 8.500H20" stroke="#17358a" stroke-width="2.400" /></svg>
            <svg class="i-z z2" width="24" height="24" viewBox="0 0 24 24"><path d="M10 13L2 22" stroke="#a5a5a5" stroke-width="4" /><circle cx="15.500" cy="8.500" r="7.500" fill="#eee" stroke="#bbb" stroke-width="1.500" /><path d="M12 8.500H19" stroke="#888" stroke-width="2.400" /></svg>
            <svg class="i-z z3" width="24" height="24" viewBox="0 0 24 24"><path d="M8 17L1 23" stroke="#c77a22" stroke-width="4" /><circle cx="13" cy="11" r="10.500" fill="#dcebff" stroke="#6a7fe0" stroke-width="1.500" /><path d="M7 3L11 9M19 3L15 9M7 19L11 13M19 19L15 13M7 3V8M19 3V8M7 19V14M19 19V14M6 3.500H10M20 3.500H16M6 18.500H10M20 18.500H16" stroke="#17358a" stroke-width="1.800" /><rect x="10.500" y="8" width="5" height="6" fill="#fff" stroke="#17358a" stroke-width="1.600" /></svg>
            <i class="sep s3" />
            <span class="t-page">Page 1 of 1</span>
            <i class="sep s4" />
            <svg v-for="(n, i) in navGlyph" :key="i" class="i-nav" width="25" height="25" viewBox="0 0 24 24"><circle cx="12" cy="12" r="11.400" fill="url(#gBtn)" stroke="#8b8b8b" /><path :d="n" fill="none" stroke="#f4f4f4" stroke-width="1.900" /></svg>
            <span class="grow" /><span class="t-help">Help</span><span class="t-close">Close</span>
          </div>
          <div class="stage">
            <div class="paper">
              <ul class="names">
                <li v-for="(s, i) in signals" :key="i" :class="{ indent: s.indent }">
                  <svg width="20" height="19" viewBox="0 0 20 19" v-html="glyph[s.icon]" /><span>{{ s.name }}</span>
                </li>
              </ul>
              <svg class="wave" width="1000" height="937" viewBox="-3 0 1000 937">
                <defs>
                  <pattern id="hatch" width="4" height="4" patternUnits="userSpaceOnUse"><path d="M0 0H1V1H0ZM1 1H2V2H1ZM3 1H4V2H3ZM2 2H3V3H2ZM1 3H2V4H1ZM3 3H4V4H3Z" fill="#00cc00" shape-rendering="crispEdges" /><path d="M0 0H4V4H0Z" fill="#00cc00" fill-opacity=".16" /></pattern>
                  <clipPath id="wclip"><rect x="-3" y="0" width="997" height="937" /></clipPath>
                </defs>
                <g clip-path="url(#wclip)">
                  <rect v-for="(f, i) in fills" :key="'f' + i" :x="f.x" :y="f.y" :width="f.w" :height="f.h" :fill="f.c" />
                  <rect v-for="(h, i) in hatches" :key="'h' + i" :x="h.x" :y="h.y" :width="h.w" height="17" fill="url(#hatch)" />
                  <path v-for="(s, i) in segs" :key="'s' + i" :d="s.d" :stroke="s.color" fill="none" stroke-width="1.500" />
                  <path v-for="(m, i) in majors" :key="'m' + i" :d="`M${m.x} 69V888`" stroke="#444" stroke-opacity=".65" stroke-width="1" />
                  <path v-for="(t, i) in ticks" :key="'t' + i" :d="`M${t.x} ${t.y}V69`" stroke="#666" stroke-width="1" />
                  <path d="M0 69.500H994M0 887.500H994" stroke="#666" stroke-width="1.200" />
                  <text v-for="(m, i) in majors" :key="'l' + i" :x="m.x + 2" y="58">{{ m.t }}</text>
                  <text v-for="(t, i) in txts" :key="'v' + i" :x="t.x" :y="t.y" :textLength="t.len" text-anchor="middle">{{ t.t }}</text>
                </g>
              </svg>
            </div>
            <svg class="clock" width="48" height="48" viewBox="0 0 48 48"><rect width="48" height="48" rx="4" fill="#ccc" fill-opacity=".5" /><circle cx="24" cy="24" r="20" fill="url(#gClock)" /><circle cx="24" cy="23.500" r="16.500" fill="none" stroke="#bbb" stroke-width="2.500" stroke-dasharray="1 7.640" stroke-dashoffset=".5" /><path d="M26 28L16 14M24 28L23 14" stroke="#aaa" stroke-width="1.200" /></svg>
          </div>
        </div>
      </div>

      <div v-else class="files">
        <div class="fbar">
          <div class="grp g-nav">
            <span><svg width="10" height="14" viewBox="0 0 10 14"><path d="M8 1L2 7L8 13" fill="none" stroke="#8f8983" stroke-width="2" /></svg></span>
            <span><svg width="10" height="14" viewBox="0 0 10 14"><path d="M2 1L8 7L2 13" fill="none" stroke="#75716d" stroke-width="2.200" /></svg></span>
          </div>
          <div class="grp g-path">
            <span class="cur"><svg width="16" height="16" viewBox="0 0 16 16" v-html="side.Disk" /><b>1.0 TB Volume</b></span>
            <span class="crumb">CustomNetwork</span>
          </div>
          <span class="grow" />
          <div class="grp g-search"><span><svg width="16" height="16" viewBox="0 0 16 16"><circle cx="6.500" cy="6.500" r="4.700" fill="none" stroke="#75716d" stroke-width="2" /><path d="M10 10L14.500 14.500" stroke="#75716d" stroke-width="2.600" /></svg></span></div>
          <div class="grp g-view">
            <span><svg width="10" height="11" viewBox="0 0 10 11"><path d="M0 1H10M0 5H10M0 9H10" stroke="#75716d" stroke-width="2" /></svg></span>
            <span><svg width="12" height="12" viewBox="0 0 12 12"><path d="M1 2H12M1 6H12M1 10H12" stroke="#75716d" stroke-width="2" stroke-dasharray="2 2" /></svg></span>
          </div>
        </div>
        <div class="fbody">
          <aside>
            <template v-for="p in places" :key="p.title">
              <h4>{{ p.title }}</h4>
              <div v-for="it in p.items" :key="it.label" class="pl" :class="{ on: it.active }">
                <svg width="16" height="16" viewBox="0 0 16 16" v-html="side[it.icon]" /><span>{{ it.label }}</span>
                <svg v-if="it.eject" class="eject" width="12" height="12" viewBox="0 0 12 12"><path d="M6 0L12 7H0ZM0 9H12V11H0Z" fill="currentColor" /></svg>
              </div>
            </template>
          </aside>
          <main>
            <div v-for="(r, i) in rows" :key="i" class="frow" :class="'r' + i">
              <div v-for="(f, k) in r" :key="k" class="file">
                <div class="art"><svg :width="fileArt[f.kind].w" :height="fileArt[f.kind].h" :viewBox="`0 0 ${fileArt[f.kind].w} ${fileArt[f.kind].h}`" v-html="fileArt[f.kind].svg" /></div>
                <div class="lab" :class="{ sel: f.selected }"><span v-for="l in f.lines" :key="l">{{ l }}</span></div>
              </div>
            </div>
            <div class="status">"CustomNetwork" selected&nbsp; (containing 13 items)</div>
          </main>
        </div>
      </div>
    </section>
  </div>
</template>

<style>
html, body { margin: 0; overflow: hidden; }
</style>
<style scoped>
.screen { width: 3840px; height: 1080px; display: flex; overflow: hidden; background: #555; font-family: "Noto Sans", sans-serif; }
.defs { position: absolute; }
.monitor { width: 1920px; height: 1080px; display: flex; flex-direction: column; }
.panel { height: 24px; flex: none; display: flex; justify-content: space-between; align-items: center; background: linear-gradient(#f7f5f2, #ece7e1 40%, #d7cec5); }
.wtitle { padding-left: 6px; font-size: 14.400px; font-weight: 700; color: #5a544e; }
.ind { margin-right: 2px; font-size: 14.400px; fill: #5a544e; }
.desk { flex: 1; display: flex; min-height: 0; }
.launcher { width: 81px; flex: none; display: flex; flex-direction: column; background: linear-gradient(#263a61 0, #3a5486 8px, #3f5b8c 20%, #33507f 45%, #1d2f57 52%, #203562 60%, #344a7a 72%, #263b68 82%, #1f2f57 100%); box-sizing: border-box; padding-top: 6px; }
.slot { height: 68px; margin-bottom: 7px; padding-left: 6px; flex: none; position: relative; }
.tile { display: block; border-radius: 5px; box-shadow: inset 0 0 0 1px rgba(255,255,255,.25), 0 1px 3px rgba(0,0,0,.5); }
.tile.clear { background: linear-gradient(rgba(255,255,255,.22), rgba(255,255,255,.06) 40%, rgba(255,255,255,.14)); }
.pip { position: absolute; left: 0; top: 28px; }
.pip.r { left: 74px; }
.trash { margin-top: auto; margin-bottom: 6px; }
.app { flex: 1; display: flex; flex-direction: column; min-width: 0; font-family: "DejaVu Sans", sans-serif; font-size: 12.800px; color: #111; }
.toolbar { height: 45px; flex: none; background: #efefef; display: flex; align-items: center; padding: 0 13px 6px 10px; box-sizing: border-box; white-space: nowrap; }
.toolbar > * { flex: none; }
.toolbar > .grow, .grow { flex: 1; }
u { text-underline-offset: 2px; }
.t-print { width: 49px; margin-left: 3px; }
.t-setup { width: 62px; margin-left: 5px; }
.i-orient { margin-left: 0; }
.sep { width: 1px; height: 30px; background: #b4b4b4; }
.s1 { margin-left: 11px; }
.combo { margin-left: 10px; width: 140px; height: 21px; border: 1px solid #888; border-radius: 2px; box-sizing: border-box; background: linear-gradient(#cfd0d4, #e2e3e7); display: flex; align-items: stretch; justify-content: space-between; padding-left: 5px; line-height: 19px; letter-spacing: -.15px; }
.combo b { width: 15px; border-left: 1px solid #888; display: flex; align-items: center; justify-content: center; }
.s2 { margin-left: 9px; margin-right: 15px; }
.z2, .z3 { margin-left: 11px; }
.s3 { margin: 0 10px 0 14px; }
.t-page { width: 82px; }
.s4 { margin-right: 14.500px; }
.i-nav { margin-right: 10px; }
.t-help { margin-right: 18px; }
.stage { flex: 1; position: relative; background: #555; border: 2px solid #b0b0b0; border-top-color: #999; border-right-width: 1px; display: flex; align-items: flex-start; padding: 31px 0 0 31px; box-sizing: border-box; }
.paper { width: 1235px; height: 938px; box-sizing: border-box; border: solid #000; border-width: 1px 0 0 1px; background: #fff; box-shadow: 6px 6px 0 #000; display: flex; }
.names { width: 233px; margin: 0; padding: 72px 0 0 19px; box-sizing: border-box; list-style: none; border-right: 1px solid #555; font-size: 14px; flex: none; }
.names li { height: 25px; display: flex; align-items: center; gap: 5px; white-space: nowrap; }
.names li.indent { padding-left: 20px; }
.wave { font-size: 14px; fill: #111; flex: none; }
.clock { position: absolute; left: 1148px; top: 959px; }
.files { flex: 1; display: flex; flex-direction: column; min-height: 0; position: relative; }
.files::before { content: ""; position: absolute; left: 0; top: 0; bottom: 0; width: 22px; background: linear-gradient(90deg, rgba(0,0,0,.5), rgba(0,0,0,.15) 50%, transparent); z-index: 2; }
.files::after { content: ""; position: absolute; left: 0; top: 0; right: 0; height: 8px; background: linear-gradient(rgba(40,35,30,.7), rgba(40,35,30,.3) 40%, transparent); z-index: 2; }
.fbar { height: 41px; flex: none; background: #dfd7d0; border-bottom: 1px solid #c0b6ad; box-sizing: border-box; display: flex; padding: 3px 2px 0 2px; color: #75716d; font-size: 14.300px; white-space: nowrap; }
.grp { height: 34px; box-sizing: border-box; border: 1px solid #bcb0a2; border-radius: 5px; display: flex; background: linear-gradient(#e2dbd5, #d8cfc8); }
.grp span { flex: 1; display: flex; align-items: center; justify-content: center; }
.grp span + span { border-left: 1px solid #f1ede9; }
.g-nav { width: 68px; margin-right: 8px; }
.g-path { width: 262px; }
.g-path .cur { flex: none; width: 132px; gap: 2px; padding-left: 0; }
.g-path b { letter-spacing: -.3px; }
.g-search { width: 34px; margin-right: 8px; }
.g-view { width: 68px; }
.fbody { flex: 1; display: flex; min-height: 0; }
aside { width: 190px; flex: none; box-sizing: border-box; background: #e6e4e2; border-right: 1px solid #bdb8b3; color: #6c6966; font-size: 14.300px; }
aside h4 { margin: 0; height: 31px; line-height: 32px; padding-left: 15px; font-size: 14.300px; color: #5f5c59; letter-spacing: -.2px; }
.pl { height: 25px; display: flex; align-items: center; padding-left: 24px; gap: 3.500px; white-space: nowrap; }
.pl span { flex: 1; }
.pl.on { background: linear-gradient(#d9d5d1, #c9c4bf); color: #4c4a48; box-shadow: inset 0 1px #c3beb9; }
.eject { margin-right: 9px; }
main { flex: 1; background: #fff; position: relative; padding-left: 5px; font-size: 14.300px; color: #3c3c3c; }
.frow { display: flex; }
.file { width: 155px; display: flex; flex-direction: column; align-items: center; }
.art { display: flex; align-items: flex-end; }
.r0 { height: 100px; } .r0 .art { height: 54px; }
.r1 { height: 127px; } .r1 .art { height: 70px; }
.r2 .art { height: 54px; }
.lab { margin-top: 3px; padding: 0 6px; border-radius: 4px; line-height: 17px; display: flex; flex-direction: column; align-items: center; white-space: nowrap; }
.lab.sel { padding: 0 4px; background: #dedede; color: #555; line-height: 20px; margin-top: 2px; }
.status { position: absolute; right: 2px; bottom: 1px; height: 19px; line-height: 19px; padding: 0 10px; border: 1px solid #d8d28a; background: #f8f3a6; white-space: nowrap; font-size: 14.500px; }
</style>
